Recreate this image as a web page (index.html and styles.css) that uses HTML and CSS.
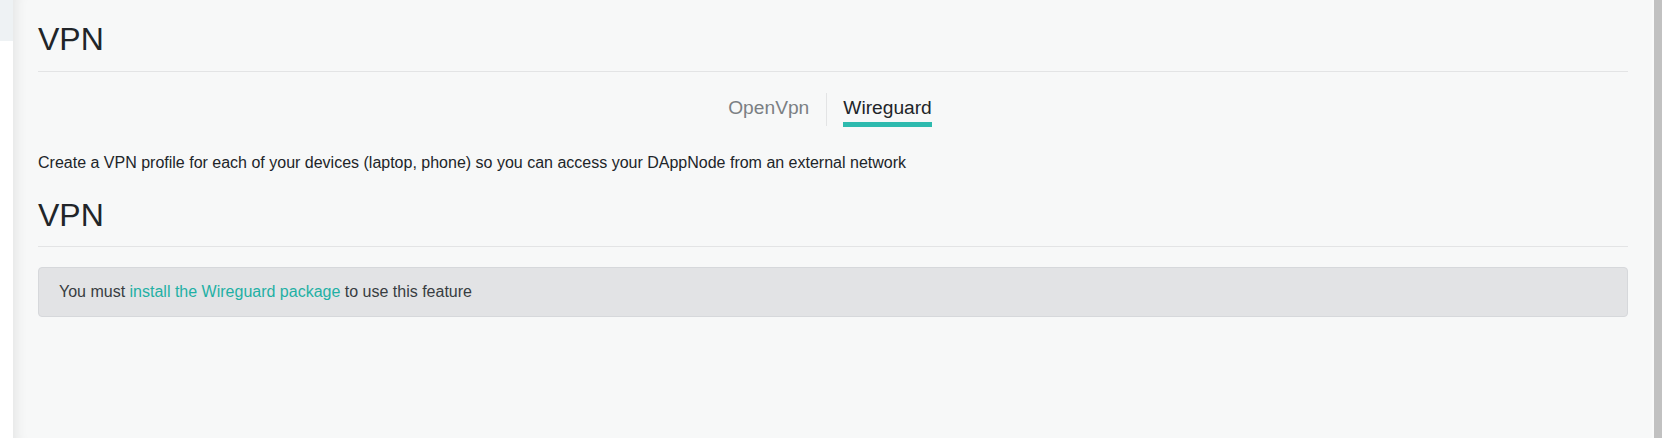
FILE: index.html
```html
<!DOCTYPE html>
<html>
<head>
<meta charset="utf-8">
<link rel="stylesheet" href="styles.css">
</head>
<body>
<div class="app">
  <aside class="sidebar"><div class="sidebar-top"></div></aside>
  <main class="main">
    <h1 class="title">VPN</h1>
    <div class="tabs">
      <div class="tab">OpenVpn</div>
      <div class="tab-sep"></div>
      <div class="tab active">Wireguard</div>
    </div>
    <p class="desc">Create a VPN profile for each of your devices (laptop, phone) so you can access your DAppNode from an external network</p>
    <h2 class="title second">VPN</h2>
    <div class="alert">You must <a class="link" href="#">install the Wireguard package</a> to use this feature</div>
  </main>
  <div class="scroll"><div class="thumb"></div></div>
</div>
</body>
</html>
```
FILE: styles.css
```css
html, body {
  margin: 0;
  padding: 0;
  height: 100%;
}
body {
  font-family: "Liberation Sans", Arial, sans-serif;
  color: #212529;
  background: #ffffff;
}
.app {
  display: flex;
  height: 438px;
  overflow: hidden;
}
.sidebar {
  width: 13px;
  flex: none;
  background: #ffffff;
}
.sidebar-top {
  height: 41px;
  background: #eef2f4;
}
.main {
  flex: 1;
  min-width: 0;
  background: #f7f8f8;
  box-shadow: inset 14px 0 14px -12px rgba(0, 0, 0, 0.09);
  padding: 20px 24px 0 25px;
}
.title {
  margin: 0;
  font-size: 32px;
  line-height: 38px;
  font-weight: 400;
  color: #212529;
  padding-bottom: 13px;
  border-bottom: 1px solid #e3e4e5;
}
.tabs {
  display: flex;
  justify-content: center;
  margin-top: 21px;
  padding-right: 6px;
}
.tab {
  font-size: 19.2px;
  line-height: 22px;
  padding-top: 4px;
  color: #7b7f83;
}
.tab.active {
  color: #212529;
}
.tab.active::after {
  content: "";
  display: block;
  height: 5px;
  margin-top: 3px;
  background: #2dbaae;
}
.tab-sep {
  width: 1px;
  height: 33px;
  background: #e3e4e5;
  margin: 0 16px 0 17px;
}
.desc {
  margin: 24px 0 0;
  font-size: 16px;
  line-height: 24px;
  color: #212529;
}
.second {
  margin-top: 21px;
  padding-bottom: 12px;
}
.alert {
  margin-top: 20px;
  padding: 12px 20px;
  font-size: 16px;
  line-height: 24px;
  color: #383d41;
  background: #e2e3e5;
  border: 1px solid #d6d8db;
  border-radius: 4px;
}
.link {
  color: #1fb0a4;
  text-decoration: none;
}
.scroll {
  width: 10px;
  flex: none;
  background: #f9fafa;
  display: flex;
  justify-content: flex-end;
}
.thumb {
  width: 8px;
  height: 100%;
  background: #c1c1c1;
}
```
